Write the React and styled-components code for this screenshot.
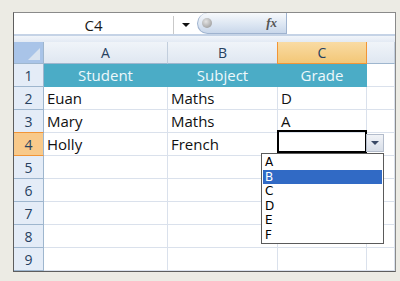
import styled, { createGlobalStyle } from "styled-components"

const GlobalStyle = createGlobalStyle`
  html, body {
    margin: 0;
    padding: 0;
    background: #ecebe4;
  }
  body {
    font-family: "Open Sans", "Liberation Sans", sans-serif;
  }
`

const Page = styled.div`
  width: 400px;
  height: 281px;
  padding: 12px 0 0 13px;
  box-sizing: border-box;
`

const Sheet = styled.div`
  position: relative;
  width: 383px;
  box-sizing: border-box;
  background: #fff;
  border: 1px solid #8a8a8a;
  border-left-color: #5e5e5e;
  border-bottom-color: #5e5e5e;
`

const FormulaBar = styled.div`
  display: flex;
  align-items: stretch;
  height: 21px;
  background: #fff;
`

const NameBox = styled.div`
  width: 159px;
  display: flex;
  align-items: center;
  justify-content: center;
  font-size: 15px;
  color: #1a1a1a;
  border-right: 1px solid #c9c9c9;
  margin: 3px 0 0;
`

const NameArrow = styled.div`
  width: 23px;
  display: flex;
  align-items: center;
  justify-content: center;
  padding-top: 2px;
  &::after {
    content: "";
    border-left: 4px solid transparent;
    border-right: 4px solid transparent;
    border-top: 4px solid #111;
  }
`

const FxPill = styled.div`
  width: 90px;
  display: flex;
  align-items: center;
  justify-content: space-between;
  padding: 0 9px 0 4px;
  box-sizing: border-box;
  border: 1px solid #9fb3cf;
  border-top: none;
  border-radius: 11px 0 0 11px;
  background: linear-gradient(#f7f9fc, #dbe5f2 60%, #c9d7ea);
`

const Knob = styled.span`
  width: 10px;
  height: 10px;
  border-radius: 50%;
  background: radial-gradient(circle at 40% 35%, #e4e4e4, #8e8e8e);
`

const Fx = styled.span`
  font-family: "Liberation Serif", serif;
  font-style: italic;
  font-weight: bold;
  font-size: 13px;
  color: #555;
`

const FormulaInput = styled.div`
  flex: 1;
  background: #fff;
`

const Divider = styled.div`
  height: 6px;
  border-top: 2px solid #c5d3e6;
  background: linear-gradient(#f1f5fa, #e3eaf4);
`

const Grid = styled.div`
  display: grid;
  grid-template-columns: 30px 124px 110px 89px 1fr;
  grid-template-rows: 22px repeat(9, 23px);
`

const Corner = styled.div`
  position: relative;
  background: #a9c4e8;
  border-right: 1px solid #9eb6ce;
  border-bottom: 1px solid #9eb6ce;
  &::after {
    content: "";
    position: absolute;
    right: 3px;
    bottom: 3px;
    border-left: 12px solid transparent;
    border-bottom: 12px solid #d9e3ef;
  }
`

const ColHead = styled.div`
  display: flex;
  align-items: center;
  justify-content: center;
  font-size: 14px;
  color: #27415f;
  background: ${({ $active }) =>
    $active ? "linear-gradient(#f9dba4, #f3c777)" : "linear-gradient(#f0f4f9, #dfe7f1)"};
  border-right: 1px solid ${({ $active }) => ($active ? "#f29536" : "#c2cedd")};
  border-bottom: 1px solid ${({ $active }) => ($active ? "#f29536" : "#9eb6ce")};
  ${({ $active }) => $active && "border-left: 1px solid #f29536; margin-left: -1px;"}
`

const RowHead = styled.div`
  display: flex;
  align-items: center;
  justify-content: center;
  font-size: 14px;
  color: #27415f;
  background: ${({ $active }) => ($active ? "#f8c98a" : "#e4ecf7")};
  border-right: 1px solid #9eb6ce;
  border-bottom: 1px solid ${({ $active }) => ($active ? "#f29536" : "#9eb6ce")};
  ${({ $active }) => $active && "border-top: 1px solid #f29536; margin-top: -1px;"}
`

const Cell = styled.div`
  display: flex;
  align-items: center;
  justify-content: ${({ $center }) => ($center ? "center" : "flex-start")};
  padding: 0 3px;
  font-size: 15px;
  color: ${({ $head }) => ($head ? "#eef8fb" : "#111")};
  background: ${({ $head }) => ($head ? "#4bacc6" : "#fff")};
  border-right: 1px solid ${({ $head }) => ($head ? "#4bacc6" : "#dae1ec")};
  border-bottom: 1px solid ${({ $head }) => ($head ? "#4bacc6" : "#dae1ec")};
  overflow: hidden;
  white-space: nowrap;
`

const ActiveCell = styled.div`
  position: absolute;
  left: 263px;
  top: 117px;
  width: 90px;
  height: 23px;
  box-sizing: border-box;
  border: 2px solid #000;
`

const DropButton = styled.div`
  position: absolute;
  left: 352px;
  top: 121px;
  width: 18px;
  height: 18px;
  box-sizing: border-box;
  border: 1px solid #b3bccb;
  background: linear-gradient(#f1f3f7, #d8dee8);
  display: flex;
  align-items: center;
  justify-content: center;
  &::after {
    content: "";
    border-left: 4px solid transparent;
    border-right: 4px solid transparent;
    border-top: 4px solid #3b4a66;
  }
`

const List = styled.ul`
  position: absolute;
  left: 247px;
  top: 140px;
  width: 123px;
  margin: 0;
  padding: 1px;
  list-style: none;
  background: #fff;
  border: 1px solid #5a5a5a;
  box-sizing: border-box;
  font-family: "DejaVu Sans", sans-serif;
  font-size: 12px;
`

const Item = styled.li`
  height: 14.5px;
  line-height: 14.5px;
  padding-left: 2px;
  color: ${({ $selected }) => ($selected ? "#fff" : "#000")};
  background: ${({ $selected }) => ($selected ? "#316ac5" : "transparent")};
`

const columns = ["A", "B", "C"]
const rows = [
  ["Student", "Subject", "Grade"],
  ["Euan", "Maths", "D"],
  ["Mary", "Maths", "A"],
  ["Holly", "French", ""],
]

export default function App() {
  return (
    <Page>
      <GlobalStyle />
      <Sheet>
        <FormulaBar>
          <NameBox>C4</NameBox>
          <NameArrow />
          <FxPill>
            <Knob />
            <Fx>fx</Fx>
          </FxPill>
          <FormulaInput />
        </FormulaBar>
        <Divider />
        <Grid>
          <Corner />
          {columns.map((c) => (
            <ColHead key={c} $active={c === "C"}>
              {c}
            </ColHead>
          ))}
          <ColHead />
          {Array.from({ length: 9 }, (_, i) => {
            const data = rows[i] || ["", "", ""]
            return [
              <RowHead key={`h${i}`} $active={i === 3}>
                {i + 1}
              </RowHead>,
              ...data.map((v, j) => (
                <Cell key={`${i}-${j}`} $head={i === 0} $center={i === 0}>
                  {v}
                </Cell>
              )),
              <Cell key={`${i}-x`} />,
            ]
          })}
        </Grid>
        <ActiveCell />
        <DropButton />
        <List>
          {["A", "B", "C", "D", "E", "F"].map((g) => (
            <Item key={g} $selected={g === "B"}>
              {g}
            </Item>
          ))}
        </List>
      </Sheet>
    </Page>
  )
}
